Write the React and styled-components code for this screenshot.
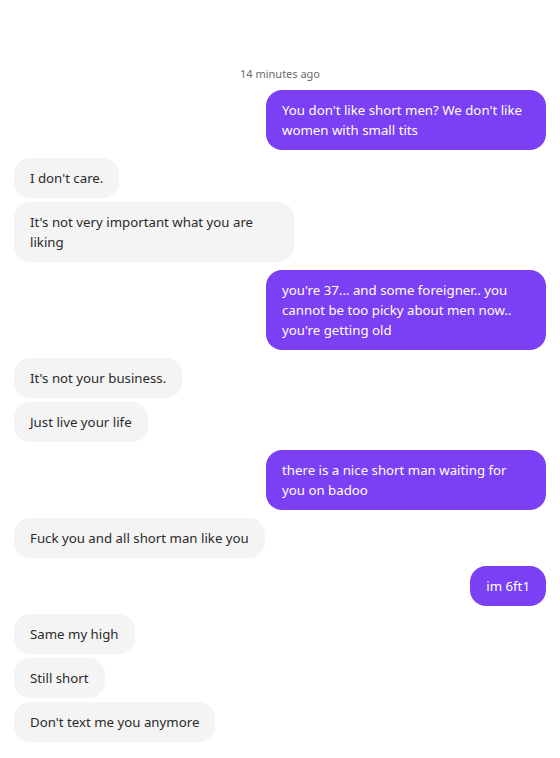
import styled, { createGlobalStyle } from "styled-components";

const Global = createGlobalStyle`
  body{margin:0;background:#fff;font-family:"Noto Sans","Open Sans",sans-serif;}
`

const grupos = [
  { mine: true, msgs: ["You don't like short men? We don't like women with small tits"] },
  { mine: false, msgs: ["I don't care.", "It's not very important what you are liking"] },
  { mine: true, msgs: ["you're 37... and some foreigner.. you cannot be too picky about men now.. you're getting old"] },
  { mine: false, msgs: ["It's not your business.", "Just live your life"] },
  { mine: true, msgs: ["there is a nice short man waiting for you on badoo"] },
  { mine: false, msgs: ["Fuck you and all short man like you"] },
  { mine: true, msgs: ["im 6ft1"] },
  { mine: false, msgs: ["Same my high", "Still short", "Don't text me you anymore"] },
]

export default function App(){
    return(
        <Tela>
            <Global/>
            <Hora>14 minutes ago</Hora>
            <Conversa>
                {grupos.map((g,i)=>
                    <Grupo key={i} $mine={g.mine}>
                        {g.msgs.map((m,j)=><Balao key={j} $mine={g.mine}>{m}</Balao>)}
                    </Grupo>
                )}
            </Conversa>
        </Tela>
    )
}

const Tela=styled.div`
    display:flex;
    flex-direction:column;
    width:560px;
    min-height:758px;
    box-sizing:border-box;
    padding:66px 14px 0;
`
const Hora=styled.div`
    text-align:center;
    font-size:11px;
    line-height:16px;
    color:#6b6b6b;
    margin-bottom:8px;
`
const Conversa=styled.div`
    display:flex;
    flex-direction:column;
    gap:8px;
`
const Grupo=styled.div`
    display:flex;
    flex-direction:column;
    gap:4px;
    align-items:${p=>p.$mine?"flex-end":"flex-start"};
`
const Balao=styled.div`
    max-width:280px;
    box-sizing:border-box;
    padding:10px 16px;
    border-radius:16px;
    font-size:13.25px;
    line-height:20px;
    background-color:${p=>p.$mine?"#7b3ff4":"#f4f4f4"};
    color:${p=>p.$mine?"#fff":"#2a2a2a"};
`
